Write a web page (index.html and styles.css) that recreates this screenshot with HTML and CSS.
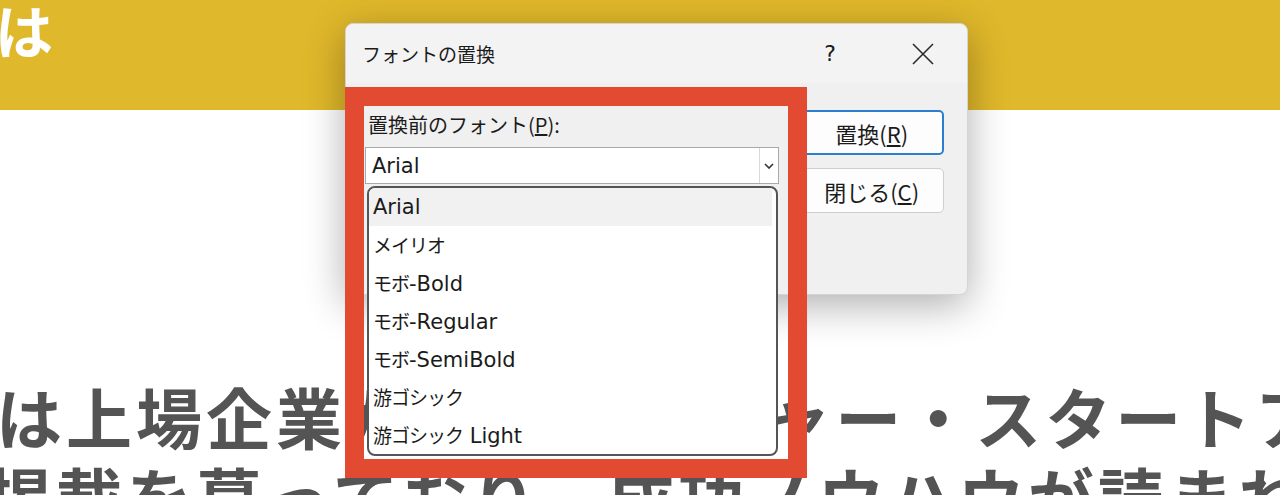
FILE: index.html
```html
<!DOCTYPE html>
<html lang="ja">
<head>
<meta charset="utf-8">
<title>フォントの置換</title>
<link rel="stylesheet" href="styles.css">
</head>
<body>
<header class="hero"><span class="hero-title">は</span></header>
<main class="article">
  <p class="lead lead1">は上場企業から、ベンチャー・スタートアップ企業</p>
  <p class="lead lead2">掲載を募っており、成功ノウハウが読まれています</p>
</main>

<div class="dialog">
  <div class="titlebar">
    <span class="title">フォントの置換</span>
    <span class="help">?</span>
    <span class="close"><svg width="22" height="22" viewBox="0 0 22 22"><path d="M1 1L21 21M21 1L1 21" stroke="#2b2b2b" stroke-width="1.6" fill="none"/></svg></span>
  </div>
  <div class="dlg-body">
    <div class="field">
      <div class="label">置換前のフォント(<u>P</u>):</div>
      <div class="combo">
        <span class="combo-text">Arial</span>
        <span class="combo-arrow"><svg width="10" height="6" viewBox="0 0 10 6"><path d="M1 1L5 5L9 1" stroke="#333" stroke-width="1.6" fill="none"/></svg></span>
      </div>
    </div>
    <div class="buttons">
      <div class="btn primary">置換(<u>R</u>)</div>
      <div class="btn">閉じる(<u>C</u>)</div>
    </div>
  </div>
</div>

<ul class="dropdown">
  <li class="selected">Arial</li>
  <li><span class="jp">メイリオ</span></li>
  <li><span class="jp">モボ</span>-Bold</li>
  <li><span class="jp">モボ</span>-Regular</li>
  <li><span class="jp">モボ</span>-SemiBold</li>
  <li><span class="jp">游ゴシック</span></li>
  <li><span class="jp">游ゴシック</span> Light</li>
</ul>

<div class="highlight"></div>
</body>
</html>
```

FILE: styles.css
```css
html, body {
  margin: 0;
  padding: 0;
}
body {
  width: 1280px;
  height: 495px;
  overflow: hidden;
  position: relative;
  background: #ffffff;
  font-family: "Noto Sans CJK JP", "Noto Sans", sans-serif;
}

.hero {
  height: 110px;
  background: #e0b82b;
  overflow: hidden;
}
.hero-title {
  display: block;
  color: #ffffff;
  font-weight: 700;
  font-size: 58px;
  line-height: 58px;
  margin-left: -5px;
}

.article {
  padding-top: 265px;
}
.lead {
  margin: 0;
  font-weight: 700;
  font-size: 66px;
  line-height: 80px;
  letter-spacing: 4px;
  color: #545454;
  white-space: nowrap;
}
.lead1 { margin-left: -4px; }
.lead2 { margin-left: -14px; }

/* dialog window overlay */
.dialog {
  position: absolute;
  left: 345px;
  top: 23px;
  width: 623px;
  height: 272px;
  box-sizing: border-box;
  background: #f0f0f0;
  border: 1px solid #d4d4d4;
  border-radius: 8px;
  box-shadow: 0 10px 40px rgba(0, 0, 0, 0.32);
  color: #1b1b1b;
}
.titlebar {
  height: 59px;
  display: flex;
  align-items: center;
  padding: 0 33px 0 16px;
  background: #f3f3f3;
  border-radius: 8px 8px 0 0;
}
.title {
  flex: 1;
  font-size: 19px;
  color: #1b1b1b;
}
.help {
  font-size: 22px;
  margin-right: 76px;
  font-family: "DejaVu Sans", sans-serif;
}
.close {
  display: flex;
  width: 22px;
  height: 22px;
}

.dlg-body {
  display: flex;
  gap: 20px;
  padding: 27px 23px 0 19px;
}
.field {
  width: 415px;
}
.label {
  font-size: 20px;
  line-height: 26px;
  margin-top: 2px;
  padding-left: 3px;
}
.combo {
  margin-top: 9px;
  height: 37px;
  box-sizing: border-box;
  background: #ffffff;
  border: 1px solid #a9a9a9;
  display: flex;
  align-items: center;
}
.combo-text {
  flex: 1;
  padding-left: 6px;
  font-family: "DejaVu Sans", sans-serif;
  font-size: 21px;
  color: #1a1a1a;
}
.combo-arrow {
  width: 18px;
  height: 35px;
  border-left: 1px solid #d9d9d9;
  display: flex;
  align-items: center;
  justify-content: center;
}

.buttons {
  width: 145px;
  display: flex;
  flex-direction: column;
  gap: 13px;
}
.btn {
  height: 45px;
  box-sizing: border-box;
  border: 1px solid #cfcfcf;
  border-radius: 5px;
  background: #fdfdfd;
  display: flex;
  align-items: center;
  justify-content: center;
  font-size: 22px;
  color: #1b1b1b;
}
.btn.primary {
  border: 2px solid #2a7fd0;
}

/* dropdown popup */
.dropdown {
  position: absolute;
  left: 367px;
  top: 186px;
  width: 411px;
  height: 270px;
  box-sizing: border-box;
  margin: 0;
  padding: 0 4px 0 0;
  list-style: none;
  background: #ffffff;
  border: 2px solid #555555;
  border-radius: 8px;
  overflow: hidden;
  font-family: "DejaVu Sans", "Noto Sans CJK JP", sans-serif;
  font-size: 21px;
  color: #1b1b1b;
}
.dropdown li {
  height: 38px;
  line-height: 38px;
  padding-left: 4px;
}
.dropdown li.selected {
  background: #f1f1f1;
}
.jp {
  font-family: "Noto Sans CJK JP", sans-serif;
  font-size: 19px;
  letter-spacing: -1px;
}

/* red annotation frame */
.highlight {
  position: absolute;
  left: 345px;
  top: 87px;
  width: 462px;
  height: 391px;
  box-sizing: border-box;
  border: 19px solid #e24a32;
}
```
